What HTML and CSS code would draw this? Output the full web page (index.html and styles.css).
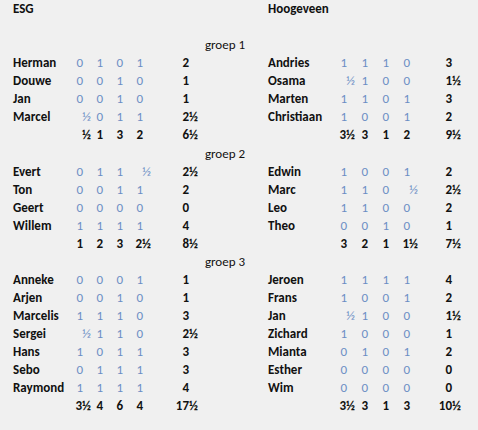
FILE: index.html
```html
<!DOCTYPE html>
<html>
<head>
<meta charset="utf-8">
<link rel="stylesheet" href="styles.css">
</head>
<body>
<div class="sheet">
  <div class="row"><span class="name">ESG</span><span></span><span></span><span></span><span></span><span></span><span></span><span></span><span class="name">Hoogeveen</span></div>
  <div class="row"></div>
  <div class="row"><span class="group">groep 1</span></div>

  <div class="row"><span class="name">Herman</span><span class="s i">0</span><span class="s i">1</span><span class="s i">0</span><span class="s i">1</span><span class="t i">2</span><span></span><span></span><span class="name">Andries</span><span class="s i">1</span><span class="s i">1</span><span class="s i">1</span><span class="s i">0</span><span class="t i">3</span></div>
  <div class="row"><span class="name">Douwe</span><span class="s i">0</span><span class="s i">0</span><span class="s i">1</span><span class="s i">0</span><span class="t i">1</span><span></span><span></span><span class="name">Osama</span><span class="s">½</span><span class="s i">1</span><span class="s i">0</span><span class="s i">0</span><span class="t">1½</span></div>
  <div class="row"><span class="name">Jan</span><span class="s i">0</span><span class="s i">0</span><span class="s i">1</span><span class="s i">0</span><span class="t i">1</span><span></span><span></span><span class="name">Marten</span><span class="s i">1</span><span class="s i">1</span><span class="s i">0</span><span class="s i">1</span><span class="t i">3</span></div>
  <div class="row"><span class="name">Marcel</span><span class="s">½</span><span class="s i">0</span><span class="s i">1</span><span class="s i">1</span><span class="t">2½</span><span></span><span></span><span class="name">Christiaan</span><span class="s i">1</span><span class="s i">0</span><span class="s i">0</span><span class="s i">1</span><span class="t i">2</span></div>
  <div class="row sum"><span></span><span class="s">½</span><span class="s i">1</span><span class="s i">3</span><span class="s i">2</span><span class="t">6½</span><span></span><span></span><span></span><span class="s">3½</span><span class="s i">3</span><span class="s i">1</span><span class="s i">2</span><span class="t">9½</span></div>
  <div class="row"><span class="group">groep 2</span></div>

  <div class="row"><span class="name">Evert</span><span class="s i">0</span><span class="s i">1</span><span class="s i">1</span><span class="s">½</span><span class="t">2½</span><span></span><span></span><span class="name">Edwin</span><span class="s i">1</span><span class="s i">0</span><span class="s i">0</span><span class="s i">1</span><span class="t i">2</span></div>
  <div class="row"><span class="name">Ton</span><span class="s i">0</span><span class="s i">0</span><span class="s i">1</span><span class="s i">1</span><span class="t i">2</span><span></span><span></span><span class="name">Marc</span><span class="s i">1</span><span class="s i">1</span><span class="s i">0</span><span class="s">½</span><span class="t">2½</span></div>
  <div class="row"><span class="name">Geert</span><span class="s i">0</span><span class="s i">0</span><span class="s i">0</span><span class="s i">0</span><span class="t i">0</span><span></span><span></span><span class="name">Leo</span><span class="s i">1</span><span class="s i">1</span><span class="s i">0</span><span class="s i">0</span><span class="t i">2</span></div>
  <div class="row"><span class="name">Willem</span><span class="s i">1</span><span class="s i">1</span><span class="s i">1</span><span class="s i">1</span><span class="t i">4</span><span></span><span></span><span class="name">Theo</span><span class="s i">0</span><span class="s i">0</span><span class="s i">1</span><span class="s i">0</span><span class="t i">1</span></div>
  <div class="row sum"><span></span><span class="s i">1</span><span class="s i">2</span><span class="s i">3</span><span class="s">2½</span><span class="t">8½</span><span></span><span></span><span></span><span class="s i">3</span><span class="s i">2</span><span class="s i">1</span><span class="s">1½</span><span class="t">7½</span></div>
  <div class="row"><span class="group">groep 3</span></div>

  <div class="row"><span class="name">Anneke</span><span class="s i">0</span><span class="s i">0</span><span class="s i">0</span><span class="s i">1</span><span class="t i">1</span><span></span><span></span><span class="name">Jeroen</span><span class="s i">1</span><span class="s i">1</span><span class="s i">1</span><span class="s i">1</span><span class="t i">4</span></div>
  <div class="row"><span class="name">Arjen</span><span class="s i">0</span><span class="s i">0</span><span class="s i">1</span><span class="s i">0</span><span class="t i">1</span><span></span><span></span><span class="name">Frans</span><span class="s i">1</span><span class="s i">0</span><span class="s i">0</span><span class="s i">1</span><span class="t i">2</span></div>
  <div class="row"><span class="name">Marcelis</span><span class="s i">1</span><span class="s i">1</span><span class="s i">1</span><span class="s i">0</span><span class="t i">3</span><span></span><span></span><span class="name">Jan</span><span class="s">½</span><span class="s i">1</span><span class="s i">0</span><span class="s i">0</span><span class="t">1½</span></div>
  <div class="row"><span class="name">Sergei</span><span class="s">½</span><span class="s i">1</span><span class="s i">1</span><span class="s i">0</span><span class="t">2½</span><span></span><span></span><span class="name">Zichard</span><span class="s i">1</span><span class="s i">0</span><span class="s i">0</span><span class="s i">0</span><span class="t i">1</span></div>
  <div class="row"><span class="name">Hans</span><span class="s i">1</span><span class="s i">0</span><span class="s i">1</span><span class="s i">1</span><span class="t i">3</span><span></span><span></span><span class="name">Mianta</span><span class="s i">0</span><span class="s i">1</span><span class="s i">0</span><span class="s i">1</span><span class="t i">2</span></div>
  <div class="row"><span class="name">Sebo</span><span class="s i">0</span><span class="s i">1</span><span class="s i">1</span><span class="s i">1</span><span class="t i">3</span><span></span><span></span><span class="name">Esther</span><span class="s i">0</span><span class="s i">0</span><span class="s i">0</span><span class="s i">0</span><span class="t i">0</span></div>
  <div class="row"><span class="name">Raymond</span><span class="s i">1</span><span class="s i">1</span><span class="s i">1</span><span class="s i">1</span><span class="t i">4</span><span></span><span></span><span class="name">Wim</span><span class="s i">0</span><span class="s i">0</span><span class="s i">0</span><span class="s i">0</span><span class="t i">0</span></div>
  <div class="row sum"><span></span><span class="s">3½</span><span class="s i">4</span><span class="s i">6</span><span class="s i">4</span><span class="t">17½</span><span></span><span></span><span></span><span class="s">3½</span><span class="s i">3</span><span class="s i">1</span><span class="s i">3</span><span class="t">10½</span></div>
</div>
</body>
</html>
```

FILE: styles.css
```css
html, body {
  margin: 0;
  padding: 0;
  background: #f0f0f0;
}

body {
  width: 478px;
  height: 430px;
  overflow: hidden;
  font-family: Carlito, Calibri, Lato, "Liberation Sans", sans-serif;
  font-size: 13px;
  color: #111111;
}

.sheet {
  display: flex;
  flex-direction: column;
  padding-left: 13px;
}

.row {
  display: grid;
  grid-template-columns: 58px 20px 20px 20px 20px 47px 47px 23px 66px 21px 21px 21px 21px 43px;
  height: 18.07px;
  line-height: 18px;
  white-space: nowrap;
}

.name {
  font-weight: 700;
}

.s {
  text-align: right;
  color: #6b8dc4;
}

.t {
  text-align: right;
  font-weight: 700;
}

.i {
  padding-right: 8px;
}

.t.i {
  padding-right: 9px;
}

.sum .s {
  color: #111111;
  font-weight: 700;
}

.group {
  grid-column: 7 / 8;
  text-align: right;
}
```
